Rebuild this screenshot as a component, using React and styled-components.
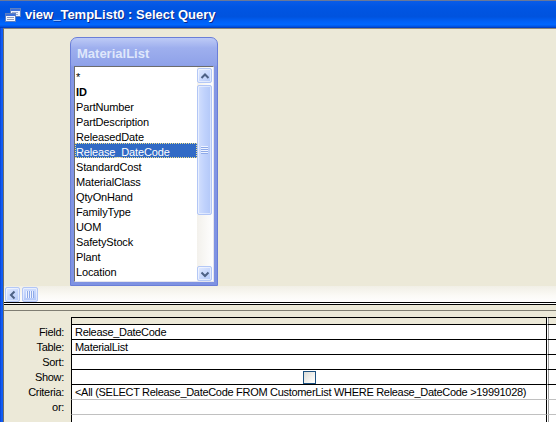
import React from 'react';
import styled, { createGlobalStyle } from 'styled-components';

const Global = createGlobalStyle`
  html, body { margin: 0; padding: 0; background: #ece9d8; overflow: hidden; }
  body { font-family: "Liberation Sans", Arial, sans-serif; }
`;

const Window = styled.div`
  width: 556px;
  height: 422px;
  display: flex;
  flex-direction: column;
  overflow: hidden;
  background: #0a4ee4;
`;

const TitleBar = styled.div`
  height: 28px;
  flex: none;
  box-sizing: border-box;
  display: flex;
  align-items: center;
  gap: 4px;
  padding: 1px 0 0 5px;
  background: linear-gradient(to bottom, #6a7898 0, #6a7898 1px, #0a5ce8 1px, #0055e3 25%, #0053de 60%, #0060f6 76%, #0067ff 88%, #0052e0 95%, #0036b8 100%);
  color: #fff;
  font: bold 13px "Liberation Sans", Arial, sans-serif;
  text-shadow: 1px 1px 0 #0b2a8a;
  white-space: nowrap;
`;

const Body = styled.div`
  flex: 1;
  display: flex;
  min-height: 0;
`;

const Frame = styled.div`
  width: 3px;
  flex: none;
  background: linear-gradient(to right, #0840d4, #1462f8 60%, #0a56ee);
`;

const Content = styled.div`
  flex: 1;
  display: flex;
  flex-direction: column;
  background: #ece9d8;
  border-left: 1px solid #716f64;
  border-top: 1px solid #8a877a;
  min-width: 0;
`;

const UpperPane = styled.div`
  position: relative;
  height: 257px;
  flex: none;
  overflow: hidden;
`;

const TableWin = styled.div`
  position: absolute;
  left: 66px;
  top: 8px;
  width: 148px;
  height: 249px;
  box-sizing: border-box;
  border: 1px solid #6a7ed8;
  border-radius: 7px 7px 0 0;
  background: linear-gradient(to bottom, #bdcaf6 0, #9eafee 10px, #8fa2e9 27px, #8497e4 29px, #7e92e2 100%);
  padding: 0 3px 3px;
  display: flex;
  flex-direction: column;
`;

const TableTitle = styled.div`
  height: 28px;
  flex: none;
  box-sizing: border-box;
  padding: 2px 0 0 3px;
  display: flex;
  align-items: center;
  color: #dfe7fb;
  font: bold 13px "Liberation Sans", Arial, sans-serif;
`;

const ListBox = styled.div`
  flex: 1;
  display: flex;
  border: 1px solid;
  border-color: #6c6c6c #e4e4ee #e4e4ee #6c6c6c;
  min-height: 0;
`;

const Items = styled.div`
  flex: 1;
  background: #fff;
  padding-top: 1px;
  overflow: hidden;
`;

const Item = styled.div`
  height: 15px;
  line-height: 16px;
  box-sizing: border-box;
  padding: 1px 0 0 1px;
  overflow: hidden;
  font-size: 11px;
  letter-spacing: -0.15px;
  font-weight: ${p => (p.$key ? 'bold' : 'normal')};
  color: ${p => (p.$selected ? '#fff' : '#000')};
  background: ${p => (p.$selected ? '#316ac5' : 'transparent')};
  outline: ${p => (p.$selected ? '1px dotted #f0e08a' : 'none')};
  outline-offset: -1px;
  white-space: nowrap;
`;

const VScroll = styled.div`
  width: 16px;
  flex: none;
  display: flex;
  flex-direction: column;
  align-items: flex-start;
  background: linear-gradient(to right, #f3f1ec, #fefefe);
`;

const ScrollButton = styled.div`
  width: 15px;
  height: 15px;
  box-sizing: border-box;
  flex: none;
  margin-top: ${p => p.$mt || 0}px;
  border: 1px solid #b4c8f6;
  border-radius: 2px;
  background: linear-gradient(135deg, #e2eafe 0%, #c8d8fd 55%, #b4c9f8 100%);
  box-shadow: inset 0 0 0 1px rgba(255, 255, 255, 0.55);
  display: flex;
  align-items: center;
  justify-content: center;
`;

const Thumb = styled.div`
  flex: none;
  width: ${p => p.$w}px;
  height: ${p => p.$h}px;
  margin: ${p => p.$m};
  box-sizing: border-box;
  border: 1px solid #b2c6f6;
  border-radius: 2px;
  background: ${p => p.$vertical
    ? 'linear-gradient(to right, #d2dffd, #c0d2fc 50%, #b3c8f8)'
    : 'linear-gradient(to bottom, #d2dffd, #c0d2fc 50%, #b3c8f8)'};
  box-shadow: inset 0 0 0 1px rgba(255, 255, 255, 0.5);
  display: flex;
  align-items: center;
  justify-content: center;
`;

const Spacer = styled.div`
  flex: 1;
`;

const Grip = styled.span`
  display: block;
  width: ${p => (p.$vertical ? 7 : 8)}px;
  height: ${p => (p.$vertical ? 8 : 7)}px;
  background: ${p => p.$vertical
    ? 'repeating-linear-gradient(to bottom, #eef3ff 0 1px, #8eaae8 1px 2px)'
    : 'repeating-linear-gradient(to right, #eef3ff 0 1px, #8eaae8 1px 2px)'};
`;

const HScroll = styled.div`
  height: 16px;
  flex: none;
  box-sizing: border-box;
  display: flex;
  align-items: center;
  padding-left: 1px;
  background: linear-gradient(to bottom, #f1efe6, #fbfaf6 60%, #fefefe);
`;

const Splitter = styled.div`
  height: 15px;
  flex: none;
  background: linear-gradient(to bottom, #000 0 1px, #fff 1px 2px, #000 2px 3px, #ece9d8 3px 8px, #7f7d72 8px 9px, #ece9d8 9px);
`;

const Grid = styled.div`
  flex: 1;
  display: flex;
  flex-direction: column;
  font-size: 11px;
  letter-spacing: -0.3px;
  color: #000;
`;

const GridRow = styled.div`
  display: flex;
  height: ${p => p.$h}px;
  flex: none;
`;

const Label = styled.div`
  width: 67px;
  flex: none;
  box-sizing: border-box;
  padding-right: 7px;
  text-align: right;
  line-height: 14px;
  background: #ece9d8;
  white-space: nowrap;
`;

const Cell = styled.div`
  width: ${p => (p.$main ? '476px' : 'auto')};
  flex: ${p => (p.$main ? 'none' : '1')};
  box-sizing: border-box;
  border-left: 1px solid ${p => (p.$main ? '#000' : '#fff')};
  border-right: ${p => (p.$main ? '1px solid #000' : 'none')};
  box-shadow: ${p => (p.$main ? 'none' : 'inset 1px 0 0 #9d9d9d')};
  border-top: ${p => (p.$header ? '1px solid #000' : 'none')};
  border-bottom: 1px solid ${p => p.$line || 'transparent'};
  background: ${p => (p.$header ? '#ece9d8' : '#fff')};
  padding-left: 3px;
  line-height: 14px;
  white-space: nowrap;
  overflow: hidden;
  display: flex;
  justify-content: ${p => (p.$center ? 'center' : 'flex-start')};
  align-items: ${p => (p.$center ? 'center' : 'flex-start')};
`;

const Check = styled.span`
  width: 13px;
  height: 13px;
  box-sizing: border-box;
  margin-left: -3px;
  border: 1px solid #1c5180;
  background: linear-gradient(135deg, #dcdcd7, #fdfdfb 85%);
`;

const Chevron = ({ dir }) => {
  const d = {
    up: 'M3.5 9 L7 5.5 L10.5 9',
    down: 'M3.5 5.5 L7 9 L10.5 5.5',
    left: 'M8.5 3.5 L5 7 L8.5 10.5',
  }[dir];
  return (
    <svg width="13" height="13" viewBox="0 0 13 13">
      <path d={d} fill="none" stroke="#4d6185" strokeWidth="2" />
    </svg>
  );
};

const QueryIcon = () => (
  <svg width="16" height="16" viewBox="0 0 16 16">
    <rect x="5.5" y="1.5" width="10" height="8" fill="#eef2fc" stroke="#5d7fc0" />
    <rect x="6" y="2" width="9" height="2" fill="#3d70da" />
    <rect x="7" y="5" width="6" height="1" fill="#9aaad0" />
    <rect x="7" y="7" width="6" height="1" fill="#9aaad0" />
    <rect x="0.5" y="6.5" width="10" height="8" fill="#f7f8fc" stroke="#5d7fc0" />
    <rect x="1" y="7" width="9" height="2" fill="#3d70da" />
    <rect x="2" y="10" width="7" height="1" fill="#8e9cc0" />
    <rect x="2" y="12" width="7" height="1" fill="#8e9cc0" />
  </svg>
);

const fields = [
  '*', 'ID', 'PartNumber', 'PartDescription', 'ReleasedDate', 'Release_DateCode',
  'StandardCost', 'MaterialClass', 'QtyOnHand', 'FamilyType', 'UOM', 'SafetyStock',
  'Plant', 'Location',
];

const rows = [
  { label: 'Field:', value: 'Release_DateCode', line: '#000' },
  { label: 'Table:', value: 'MaterialList', line: '#000' },
  { label: 'Sort:', value: '', line: '#000' },
  { label: 'Show:', value: '', line: '#000', check: true },
  { label: 'Criteria:', value: '<All (SELECT Release_DateCode FROM CustomerList WHERE Release_DateCode >19991028)', line: '#c0c0c0' },
  { label: 'or:', value: '', line: '#c0c0c0' },
];

export default function App() {
  return (
    <>
      <Global />
      <Window>
        <TitleBar>
          <QueryIcon />
          <span>view_TempList0 : Select Query</span>
        </TitleBar>
        <Body>
          <Frame />
          <Content>
            <UpperPane>
              <TableWin>
                <TableTitle>MaterialList</TableTitle>
                <ListBox>
                  <Items>
                    {fields.map(f => (
                      <Item key={f} $key={f === 'ID'} $selected={f === 'Release_DateCode'}>
                        {f}
                      </Item>
                    ))}
                  </Items>
                  <VScroll>
                    <ScrollButton $mt={1}><Chevron dir="up" /></ScrollButton>
                    <Thumb $vertical $w={15} $h={130} $m="2px 0 0 0"><Grip $vertical /></Thumb>
                    <Spacer />
                    <ScrollButton><Chevron dir="down" /></ScrollButton>
                  </VScroll>
                </ListBox>
              </TableWin>
            </UpperPane>
            <HScroll>
              <ScrollButton><Chevron dir="left" /></ScrollButton>
              <Thumb $w={16} $h={15} $m="0 0 0 2px"><Grip /></Thumb>
            </HScroll>
            <Splitter />
            <Grid>
              <GridRow $h={8}>
                <Label />
                <Cell $main $header $line="#000" />
                <Cell $header $line="#000" />
              </GridRow>
              {rows.map(r => (
                <GridRow key={r.label} $h={15}>
                  <Label>{r.label}</Label>
                  <Cell $main $line={r.line} $center={r.check}>
                    {r.check ? <Check /> : r.value}
                  </Cell>
                  <Cell $line={r.line} />
                </GridRow>
              ))}
              <GridRow $h={15}>
                <Label />
                <Cell $main />
                <Cell />
              </GridRow>
            </Grid>
          </Content>
        </Body>
      </Window>
    </>
  );
}
